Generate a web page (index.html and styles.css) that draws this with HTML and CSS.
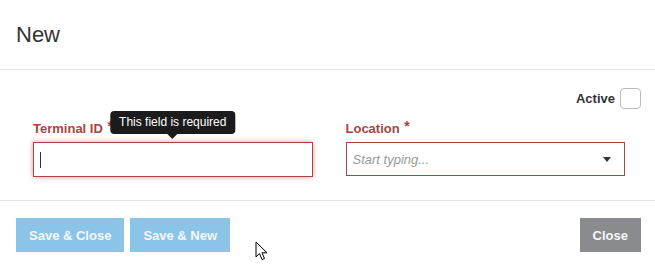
FILE: index.html
```html
<!DOCTYPE html>
<html lang="en">
<head>
  <meta charset="UTF-8" />
  <title>New</title>
  <link rel="stylesheet" href="styles.css">
</head>
<body>
  <div class="modal">
    <div class="modal-header">
      <h2>New</h2>
    </div>

    <div class="modal-body">
      <div class="active-row">
        <label class="active-label">Active</label>
        <span class="checkbox"></span>
      </div>

      <div class="form-row">
        <div class="field">
          <label class="field-label">Terminal ID <span class="req">*</span></label>
          <div class="input-wrap">
            <div class="tooltip">This field is required</div>
            <div class="text-input invalid"><span class="caret"></span></div>
          </div>
        </div>
        <div class="field">
          <label class="field-label">Location <span class="req">*</span></label>
          <div class="select-input">
            <span class="placeholder">Start typing...</span>
            <span class="arrow"></span>
          </div>
        </div>
      </div>
    </div>

    <div class="modal-footer">
      <div class="btn-group">
        <button class="btn btn-primary">Save &amp; Close</button>
        <button class="btn btn-primary">Save &amp; New</button>
      </div>
      <button class="btn btn-default">Close</button>
    </div>

    <svg class="cursor" width="13" height="21" viewBox="0 0 13 21">
      <path d="M1 1 L1 16 L4.5 12.5 L7 18.5 L9.5 17.5 L7 11.8 L12 11.8 Z" fill="#fff" stroke="#000" stroke-width="1" stroke-linejoin="round"/>
    </svg>
  </div>
</body>
</html>
```

FILE: styles.css
```css
body {
  margin: 0;
  font-family: 'Liberation Sans', Arial, sans-serif;
  background: #fff;
  color: #333;
}
.modal {
  position: relative;
  width: 655px;
  height: 265px;
}
.modal-header {
  height: 69px;
  display: flex;
  align-items: center;
  padding: 0 16px;
  border-bottom: 1px solid #e5e5e5;
}
.modal-header h2 {
  margin: 0;
  font-size: 22px;
  font-weight: 400;
  color: #333;
}
.modal-body {
  height: 130px;
  padding: 0 14px 0 33px;
}
.active-row {
  display: flex;
  justify-content: flex-end;
  align-items: center;
  gap: 5px;
  padding-top: 18px;
}
.active-label {
  font-size: 13px;
  font-weight: 700;
  color: #333;
}
.checkbox {
  width: 19px;
  height: 19px;
  border: 1px solid #bbb;
  border-radius: 4px;
  background: #fff;
}
.form-row {
  display: flex;
  gap: 33px;
  padding-right: 16px;
  margin-top: 12px;
}
.field {
  flex: 1;
}
.field-label {
  display: block;
  font-size: 13px;
  font-weight: 700;
  color: #a94442;
  height: 21px;
  line-height: 16px;
}
.req {
  font-size: 14px;
  vertical-align: top;
  position: relative;
  top: -3px;
  margin-left: 1px;
}
.input-wrap {
  position: relative;
}
.text-input {
  height: 33px;
  border: 1px solid #a94442;
  box-shadow: 0 0 5px rgba(169, 68, 66, 0.55);
  display: flex;
  align-items: center;
  padding-left: 6px;
}
.caret {
  width: 1px;
  height: 16px;
  background: #333;
}
.tooltip {
  position: absolute;
  left: 50%;
  bottom: 100%;
  transform: translateX(-50%);
  margin-bottom: 8px;
  background: #1b1b1b;
  color: #fff;
  font-size: 12px;
  line-height: 23px;
  padding: 0 9px;
  border-radius: 4px;
  white-space: nowrap;
}
.tooltip::after {
  content: '';
  position: absolute;
  left: 50%;
  top: 100%;
  margin-left: -5px;
  border: 5px solid transparent;
  border-top-color: #1b1b1b;
}
.select-input {
  height: 32px;
  border: 1px solid #a94442;
  display: flex;
  align-items: center;
  justify-content: space-between;
  padding: 0 13px 0 6px;
}
.placeholder {
  font-size: 13px;
  font-style: italic;
  color: #999;
}
.arrow {
  width: 0;
  height: 0;
  border-left: 4px solid transparent;
  border-right: 4px solid transparent;
  border-top: 5px solid #333;
}
.modal-footer {
  display: flex;
  justify-content: space-between;
  align-items: flex-start;
  padding: 17px 14px 0 16px;
  border-top: 1px solid #e5e5e5;
}
.btn-group {
  display: flex;
  gap: 6px;
}
.btn {
  height: 34px;
  border: none;
  font-family: 'Liberation Sans', Arial, sans-serif;
  font-size: 13px;
  font-weight: 700;
  color: #f4f8fb;
  padding: 0 13px;
}
.btn-primary {
  background: #8cc4e8;
}
.btn-default {
  background: #8a8b8f;
}
.cursor {
  position: absolute;
  left: 255px;
  top: 241px;
}
```
